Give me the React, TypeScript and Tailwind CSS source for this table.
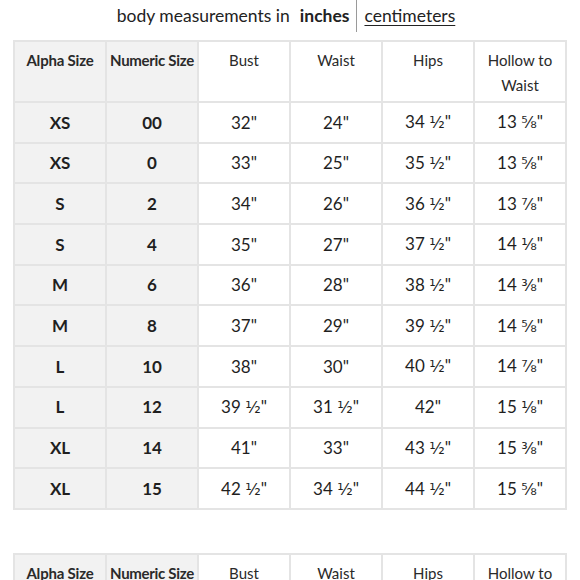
const rows: [string, string, string, string, string, string][] = [
  ["XS", "00", "32\"", "24\"", "34 ½\"", "13 ⅝\""],
  ["XS", "0", "33\"", "25\"", "35 ½\"", "13 ⅝\""],
  ["S", "2", "34\"", "26\"", "36 ½\"", "13 ⅞\""],
  ["S", "4", "35\"", "27\"", "37 ½\"", "14 ⅛\""],
  ["M", "6", "36\"", "28\"", "38 ½\"", "14 ⅜\""],
  ["M", "8", "37\"", "29\"", "39 ½\"", "14 ⅝\""],
  ["L", "10", "38\"", "30\"", "40 ½\"", "14 ⅞\""],
  ["L", "12", "39 ½\"", "31 ½\"", "42\"", "15 ⅛\""],
  ["XL", "14", "41\"", "33\"", "43 ½\"", "15 ⅜\""],
  ["XL", "15", "42 ½\"", "34 ½\"", "44 ½\"", "15 ⅝\""],
]

const cell = "border-2 border-[#e4e4e4] w-[92px] text-center"

// whole number + fraction, fraction set in a face with roomier vulgar fractions
function Measure({ value }: { value: string }) {
  const m = value.match(/^(\d+)( ?)([½⅛⅜⅝⅞]?)"$/)
  if (!m || !m[3]) return <>{value}</>
  return (
    <>
      {m[1]}
      {m[2]}
      <span className="text-[16px]" style={{ fontFamily: "'DejaVu Sans', sans-serif" }}>{m[3]}</span>"
    </>
  )
}

function Header() {
  return (
    <thead>
      <tr className="h-[61px] align-top text-[15px] leading-[25px] text-[#2a2a2a]">
        <th className={`${cell} bg-[#f2f2f2] font-bold pt-[6px] tracking-[-0.2px]`}>Alpha Size</th>
        <th className={`${cell} bg-[#f2f2f2] font-bold pt-[6px] tracking-[-0.3px] whitespace-nowrap`}>Numeric Size</th>
        <th className={`${cell} font-normal pt-[6px]`}>Bust</th>
        <th className={`${cell} font-normal pt-[6px]`}>Waist</th>
        <th className={`${cell} font-normal pt-[6px]`}>Hips</th>
        <th className={`${cell} font-normal pt-[6px] px-2`}>Hollow to Waist</th>
      </tr>
    </thead>
  )
}

function SizeTable({ body = true }: { body?: boolean }) {
  return (
    <table className="border-collapse table-fixed w-[552px] mx-auto">
      <Header />
      {body && (
        <tbody>
          {rows.map((r, i) => (
            <tr key={i} className="h-[40.7px] text-[17px] text-[#1f1f1f]">
              <td className={`${cell} bg-[#f2f2f2] font-bold`}>{r[0]}</td>
              <td className={`${cell} bg-[#f2f2f2] font-bold`}>{r[1]}</td>
              <td className={cell}><Measure value={r[2]} /></td>
              <td className={cell}><Measure value={r[3]} /></td>
              <td className={cell}><Measure value={r[4]} /></td>
              <td className={cell}><Measure value={r[5]} /></td>
            </tr>
          ))}
        </tbody>
      )}
    </table>
  )
}

export default function App() {
  return (
    <div className="w-[580px] h-[580px] overflow-hidden bg-white" style={{ fontFamily: "Lato, 'Noto Sans', sans-serif" }}>
      <div className="flex justify-center items-center h-[40px] text-[17.5px] text-[#222] pb-[8px] pr-[8px]">
        <span>body measurements in</span>
        <span className="font-bold ml-[10px]">inches</span>
        <span className="w-px h-[40px] bg-[#9a9a9a] mx-[7px] -mt-[8px]"></span>
        <span className="underline underline-offset-[3px]">centimeters</span>
      </div>
      <SizeTable />
      <div className="h-[43px]"></div>
      <SizeTable body={false} />
    </div>
  )
}
